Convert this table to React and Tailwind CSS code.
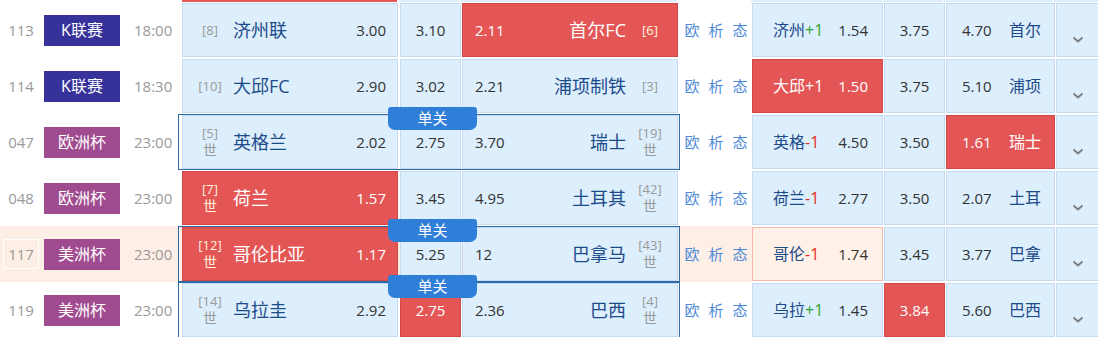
import React from "react";

const rows = [
  {
    no: "113", league: "K联赛", lc: "k", time: "18:00",
    hr: "[8]", hw: false, home: "济州联", ho: "3.00", d: "3.10",
    ao: "2.11", away: "首尔FC", ar: "[6]", aw: false, red: "a",
    hh: "济州", hcap: "+1", h1: "1.54", h2: "3.75", h3: "4.70", ha: "首尔", hred: null,
  },
  {
    no: "114", league: "K联赛", lc: "k", time: "18:30",
    hr: "[10]", hw: false, home: "大邱FC", ho: "2.90", d: "3.02",
    ao: "2.21", away: "浦项制铁", ar: "[3]", aw: false, red: null,
    hh: "大邱", hcap: "+1", h1: "1.50", h2: "3.75", h3: "5.10", ha: "浦项", hred: "h",
  },
  {
    no: "047", league: "欧洲杯", lc: "e", time: "23:00",
    hr: "[5]", hw: true, home: "英格兰", ho: "2.02", d: "2.75",
    ao: "3.70", away: "瑞士", ar: "[19]", aw: true, red: null, single: true,
    hh: "英格", hcap: "-1", h1: "4.50", h2: "3.50", h3: "1.61", ha: "瑞士", hred: "a",
  },
  {
    no: "048", league: "欧洲杯", lc: "e", time: "23:00",
    hr: "[7]", hw: true, home: "荷兰", ho: "1.57", d: "3.45",
    ao: "4.95", away: "土耳其", ar: "[42]", aw: true, red: "h",
    hh: "荷兰", hcap: "-1", h1: "2.77", h2: "3.50", h3: "2.07", ha: "土耳", hred: null,
  },
  {
    no: "117", league: "美洲杯", lc: "e", time: "23:00",
    hr: "[12]", hw: true, home: "哥伦比亚", ho: "1.17", d: "5.25",
    ao: "12", away: "巴拿马", ar: "[43]", aw: true, red: "h", single: true, peach: true,
    hh: "哥伦", hcap: "-1", h1: "1.74", h2: "3.45", h3: "3.77", ha: "巴拿", hred: null,
  },
  {
    no: "119", league: "美洲杯", lc: "e", time: "23:00",
    hr: "[14]", hw: true, home: "乌拉圭", ho: "2.92", d: "2.75",
    ao: "2.36", away: "巴西", ar: "[4]", aw: true, red: "d", single: true,
    hh: "乌拉", hcap: "+1", h1: "1.45", h2: "3.84", h3: "5.60", ha: "巴西", hred: "d",
  },
];

const blue = "bg-[#ddeefc] border border-[#c6dbf3]";
const redCell = "bg-[#e45656] border border-[#d24848] text-white";

const Rank = ({ r, w, red }) => (
  <div className={`flex flex-col items-center text-[13px] leading-[15px] ${red ? "text-[#fff4dc]" : "text-[#9a9a9a]"}`}>
    <span>{r}</span>
    {w && <span className="text-[14px] leading-[17px]">世</span>}
  </div>
);

const Chevron = () => (
  <svg width="12" height="7" viewBox="0 0 12 7">
    <path d="M1.5 1.5l4.5 4 4.5-4" fill="none" stroke="#7f7f7f" strokeWidth="2" />
  </svg>
);

const Row = ({ m }) => {
  const homeRed = m.red === "h";
  const drawRed = m.red === "d";
  const awayRed = m.red === "a";
  return (
    <div className="flex h-[56px]">
      <div className={`flex w-[752px] shrink-0 items-center ${m.peach ? "bg-[#fdefe6]" : ""}`}>
        <div className="flex w-[42px] justify-center">
          <span className={`px-[4px] py-[2px] leading-[24px] border ${m.peach ? "border-white" : "border-transparent"}`}>
            {m.no}
          </span>
        </div>
        <div
          className={`ml-[2px] flex h-[31px] w-[76px] items-center justify-center text-[16px] text-white ${
            m.lc === "k" ? "bg-[#36329a]" : "bg-[#a04b90]"
          }`}
        >
          {m.league}
        </div>
        <div className="w-[58px] pl-[14px] text-[#999]">{m.time}</div>
        <div
          className={`relative flex h-full w-[502px] border pl-[3px] pr-[1px] ${
            m.single ? "border-[#2c6aa8]" : "border-transparent"
          }`}
        >
          {m.single && (
            <div className="absolute left-[209px] top-[-8px] z-10 h-[23px] w-[89px] rounded-t-[3px] rounded-b-[7px] bg-[#2f7fd9] text-center text-[15px] leading-[23px] text-white">
              单关
            </div>
          )}
          <div className={`flex h-full w-[216px] items-center ${homeRed ? redCell : blue}`}>
            <div className="flex w-[50px] justify-center pl-[4px]">
              <Rank r={m.hr} w={m.hw} red={homeRed} />
            </div>
            <div className={`flex-1 text-[18px] ${homeRed ? "text-white" : "text-[#1c4b8a]"}`}>{m.home}</div>
            <div className={`pr-[11px] ${homeRed ? "text-white" : "text-[#333]"}`}>{m.ho}</div>
          </div>
          <div
            className={`ml-[2px] flex h-full w-[61px] items-center justify-center ${
              drawRed ? redCell : blue + " text-[#333]"
            }`}
          >
            {m.d}
          </div>
          <div className={`ml-[1px] flex h-full w-[216px] items-center ${awayRed ? redCell : blue}`}>
            <div className={`pl-[12px] ${awayRed ? "text-white" : "text-[#333]"}`}>{m.ao}</div>
            <div className={`flex-1 text-right text-[18px] ${awayRed ? "text-white" : "text-[#1c4b8a]"}`}>{m.away}</div>
            <div className="flex w-[51px] justify-center pr-[3px]">
              <Rank r={m.ar} w={m.aw} red={awayRed} />
            </div>
          </div>
        </div>
        <div className="flex w-[72px] justify-center gap-[9px] text-[15px] text-[#4d8ad8]">
          <span>欧</span>
          <span>析</span>
          <span>态</span>
        </div>
      </div>

      <div className="flex py-[1px]">
        <div
          className={`flex w-[131px] items-center justify-between pl-[20px] pr-[14px] ${
            m.hred === "h"
              ? redCell
              : m.peach
              ? "bg-[#fff0e8] border border-[#f6b7b1]"
              : blue
          }`}
        >
          <span className={`text-[16px] ${m.hred === "h" ? "text-white" : "text-[#1c4b8a]"}`}>
            {m.hh}
            <span
              className={
                m.hred === "h"
                  ? "text-white"
                  : m.hcap === "+1"
                  ? "text-[#2fa534]"
                  : "text-[#e52a22]"
              }
            >
              {m.hcap}
            </span>
          </span>
          <span className={m.hred === "h" ? "text-white" : "text-[#333]"}>{m.h1}</span>
        </div>
        <div
          className={`ml-[1px] flex w-[61px] items-center justify-center ${
            m.hred === "d" ? redCell : blue + " text-[#333]"
          }`}
        >
          {m.h2}
        </div>
        <div
          className={`ml-[1px] flex w-[109px] items-center justify-between pl-[15px] pr-[13px] ${
            m.hred === "a" ? redCell : blue
          }`}
        >
          <span className={m.hred === "a" ? "text-white" : "text-[#333]"}>{m.h3}</span>
          <span className={`text-[16px] ${m.hred === "a" ? "text-white" : "text-[#1c4b8a]"}`}>{m.ha}</span>
        </div>
        <div className={`ml-[1px] flex w-[44px] justify-center pt-[32px] ${blue}`}>
          <div>
            <Chevron />
          </div>
        </div>
      </div>
    </div>
  );
};

export default function App() {
  return (
    <div className="h-[337px] w-[1098px] overflow-hidden bg-white font-['Open_Sans','Noto_Sans_CJK_SC',sans-serif] text-[15px] text-[#999]">
      <div className="flex h-[2px] overflow-hidden">
        <div className="ml-[182px] w-[216px] bg-[#e45656]" />
        <div className="ml-[2px] w-[61px] bg-[#ddeefc]" />
        <div className="ml-[1px] w-[216px] bg-[#ddeefc]" />
        <div className="ml-[74px] w-[131px] bg-[#ddeefc]" />
        <div className="ml-[1px] w-[61px] bg-[#ddeefc]" />
        <div className="ml-[1px] w-[109px] bg-[#ddeefc]" />
        <div className="ml-[1px] w-[44px] bg-[#ddeefc]" />
      </div>
      {rows.map((m) => (
        <Row key={m.no} m={m} />
      ))}
    </div>
  );
}
